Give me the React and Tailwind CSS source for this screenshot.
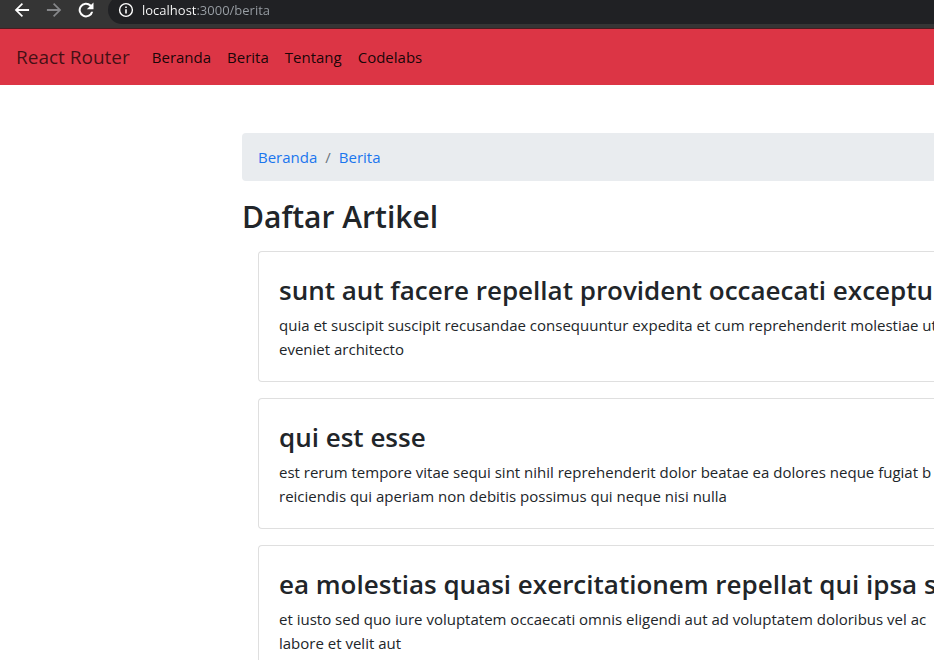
import React from "react";

const articles = [
  {
    title: "sunt aut facere repellat provident occaecati exceptu",
    lines: [
      "quia et suscipit suscipit recusandae consequuntur expedita et cum reprehenderit molestiae ut",
      "eveniet architecto",
    ],
  },
  {
    title: "qui est esse",
    lines: [
      "est rerum tempore vitae sequi sint nihil reprehenderit dolor beatae ea dolores neque fugiat b",
      "reiciendis qui aperiam non debitis possimus qui neque nisi nulla",
    ],
  },
  {
    title: "ea molestias quasi exercitationem repellat qui ipsa s",
    lines: [
      "et iusto sed quo iure voluptatem occaecati omnis eligendi aut ad voluptatem doloribus vel ac",
      "labore et velit aut",
    ],
  },
];

function BrowserBar() {
  return (
    <div className="flex h-[29px] items-start overflow-hidden border-b border-[#4a1c20] bg-[#353535] pl-3">
      <div className="flex h-5 items-center gap-3">
        <button type="button" aria-label="Back" className="text-white">
          <svg width="20" height="20" viewBox="0 0 24 24" fill="currentColor">
            <path d="M20.5 10.9H7.4l5.8-5.8L11.8 3.6 3.3 12l8.5 8.4 1.4-1.5-5.8-5.8h13.1z" />
          </svg>
        </button>
        <button type="button" aria-label="Forward" className="text-[#86878a]">
          <svg width="20" height="20" viewBox="0 0 24 24" fill="currentColor">
            <path d="M3.5 10.9h13.1l-5.8-5.8 1.4-1.5 8.5 8.4-8.5 8.4-1.4-1.5 5.8-5.8H3.5z" />
          </svg>
        </button>
        <button type="button" aria-label="Reload" className="text-white">
          <svg width="20" height="20" viewBox="0 0 24 24" fill="currentColor">
            <path d="M18.2 5.8A8.8 8.8 0 1 0 20.6 14h-2.5a6.4 6.4 0 1 1-1.6-6.5L13 11h8V3z" />
          </svg>
        </button>
      </div>
      <div className="-mt-1 ml-3 flex h-7 flex-1 items-center gap-2 rounded-l-full bg-[#202124] pl-[10px]">
        <svg width="16" height="16" viewBox="0 0 16 16" fill="none" className="shrink-0 text-white">
          <circle cx="8" cy="8" r="6.4" stroke="currentColor" strokeWidth="1.4" />
          <path d="M7.2 7.2h1.6v4.3H7.2zM7.2 4.4h1.6V6H7.2z" fill="currentColor" />
        </svg>
        <input
          type="text"
          aria-label="Address"
          defaultValue="localhost:3000/berita"
          className="min-w-0 flex-1 bg-[linear-gradient(90deg,#ffffff_55px,#9aa0a6_55px)] bg-clip-text text-[13px] leading-5 text-transparent outline-none"
        />
      </div>
    </div>
  );
}

function Navbar() {
  return (
    <nav className="flex h-14 items-center bg-[#dc3545] px-4">
      <a href="#home" className="mr-[14px] text-[19px] leading-8 text-black/70">
        React Router
      </a>
      <ul className="flex text-[15px] leading-6 text-black/90">
        {["Beranda", "Berita", "Tentang", "Codelabs"].map((item) => (
          <li key={item}>
            <a href={"#" + item.toLowerCase()} className="px-2 py-2">
              {item}
            </a>
          </li>
        ))}
      </ul>
    </nav>
  );
}

function Article({ title, lines }) {
  return (
    <article className="whitespace-nowrap rounded-l border border-r-0 border-[#dfdfdf] p-5">
      <h3 className="mb-[5px] text-[26px] leading-9 font-semibold">{title}</h3>
      <p className="text-[15px] leading-6">
        {lines.map((line) => (
          <span key={line} className="block">
            {line}
          </span>
        ))}
      </p>
    </article>
  );
}

export default function App() {
  return (
    <div className="h-screen overflow-hidden bg-white font-['Open_Sans','Noto_Sans',sans-serif] text-[#212529]">
      <BrowserBar />
      <Navbar />
      <main className="mt-12 ml-[242px]">
        <nav aria-label="Breadcrumb" className="mb-4 rounded-l bg-[#e9ecef] px-4 py-3">
          <ol className="flex gap-2 text-[15px] leading-6">
            <li>
              <a href="#beranda" className="text-[#1a76ee]">Beranda</a>
            </li>
            <li aria-hidden="true" className="text-[#6c757d]">/</li>
            <li>
              <a href="#berita" className="text-[#1a76ee]">Berita</a>
            </li>
          </ol>
        </nav>
        <h2 className="mb-[14px] text-3xl leading-10 font-semibold">Daftar Artikel</h2>
        <div className="flex flex-col gap-4 pl-4">
          {articles.map((article) => (
            <Article key={article.title} {...article} />
          ))}
        </div>
      </main>
    </div>
  );
}
